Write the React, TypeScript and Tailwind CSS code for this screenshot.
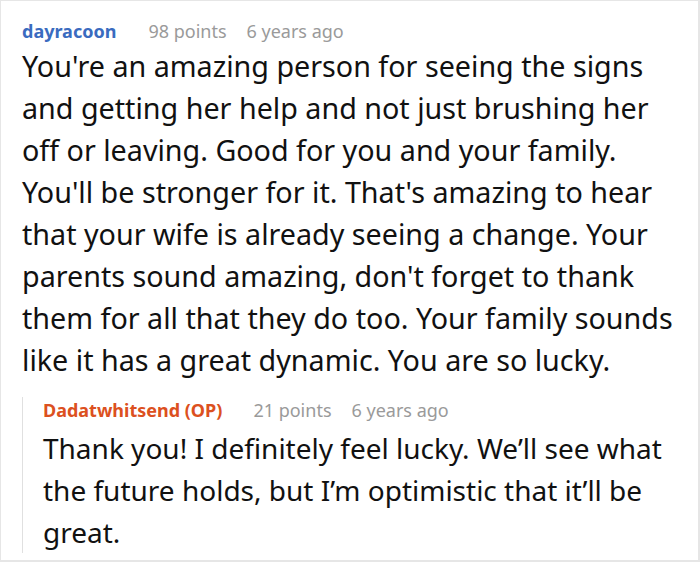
export default function App() {
  return (
    <div className="w-[700px] h-[562px] bg-white border-2 border-t border-l border-[#e6e6e6] font-['Noto_Sans',sans-serif] overflow-hidden">
      <div className="pl-[21px] pr-[12px] pt-[17px]">
        <div className="flex items-baseline text-[18px] leading-[26px]">
          <span className="font-bold text-[#3a6bbf] mr-[32px]">dayracoon</span>
          <span className="text-[#9a9a9a] mr-[20px]">98 points</span>
          <span className="text-[#9a9a9a]">6 years ago</span>
        </div>
        <p className="text-[28.7px] leading-[42px] text-[#111] mt-[1px]">
          You're an amazing person for seeing the signs and getting her help and not just brushing her off or leaving. Good
          for you and your family. You'll be stronger for it. That's amazing to hear that your wife is already seeing a
          change. Your parents sound amazing, don't forget to thank them for all that they do too. Your family sounds like
          it has a great dynamic. You are so lucky.
        </p>
        <div className="mt-[22px] border-l border-[#e0e0e0] pl-[20px]">
          <div className="flex items-baseline text-[18px] leading-[26px] -mt-[6px]">
            <span className="font-bold text-[#dc5020] mr-[31px]">Dadatwhitsend (OP)</span>
            <span className="text-[#9a9a9a] mr-[20px]">21 points</span>
            <span className="text-[#9a9a9a]">6 years ago</span>
          </div>
          <p className="text-[28px] leading-[42px] text-[#111] mt-[4px] -mb-[9px]">
            Thank you! I definitely feel lucky. We’ll see what the future holds, but I’m optimistic that it’ll be great.
          </p>
        </div>
      </div>
    </div>
  );
}
